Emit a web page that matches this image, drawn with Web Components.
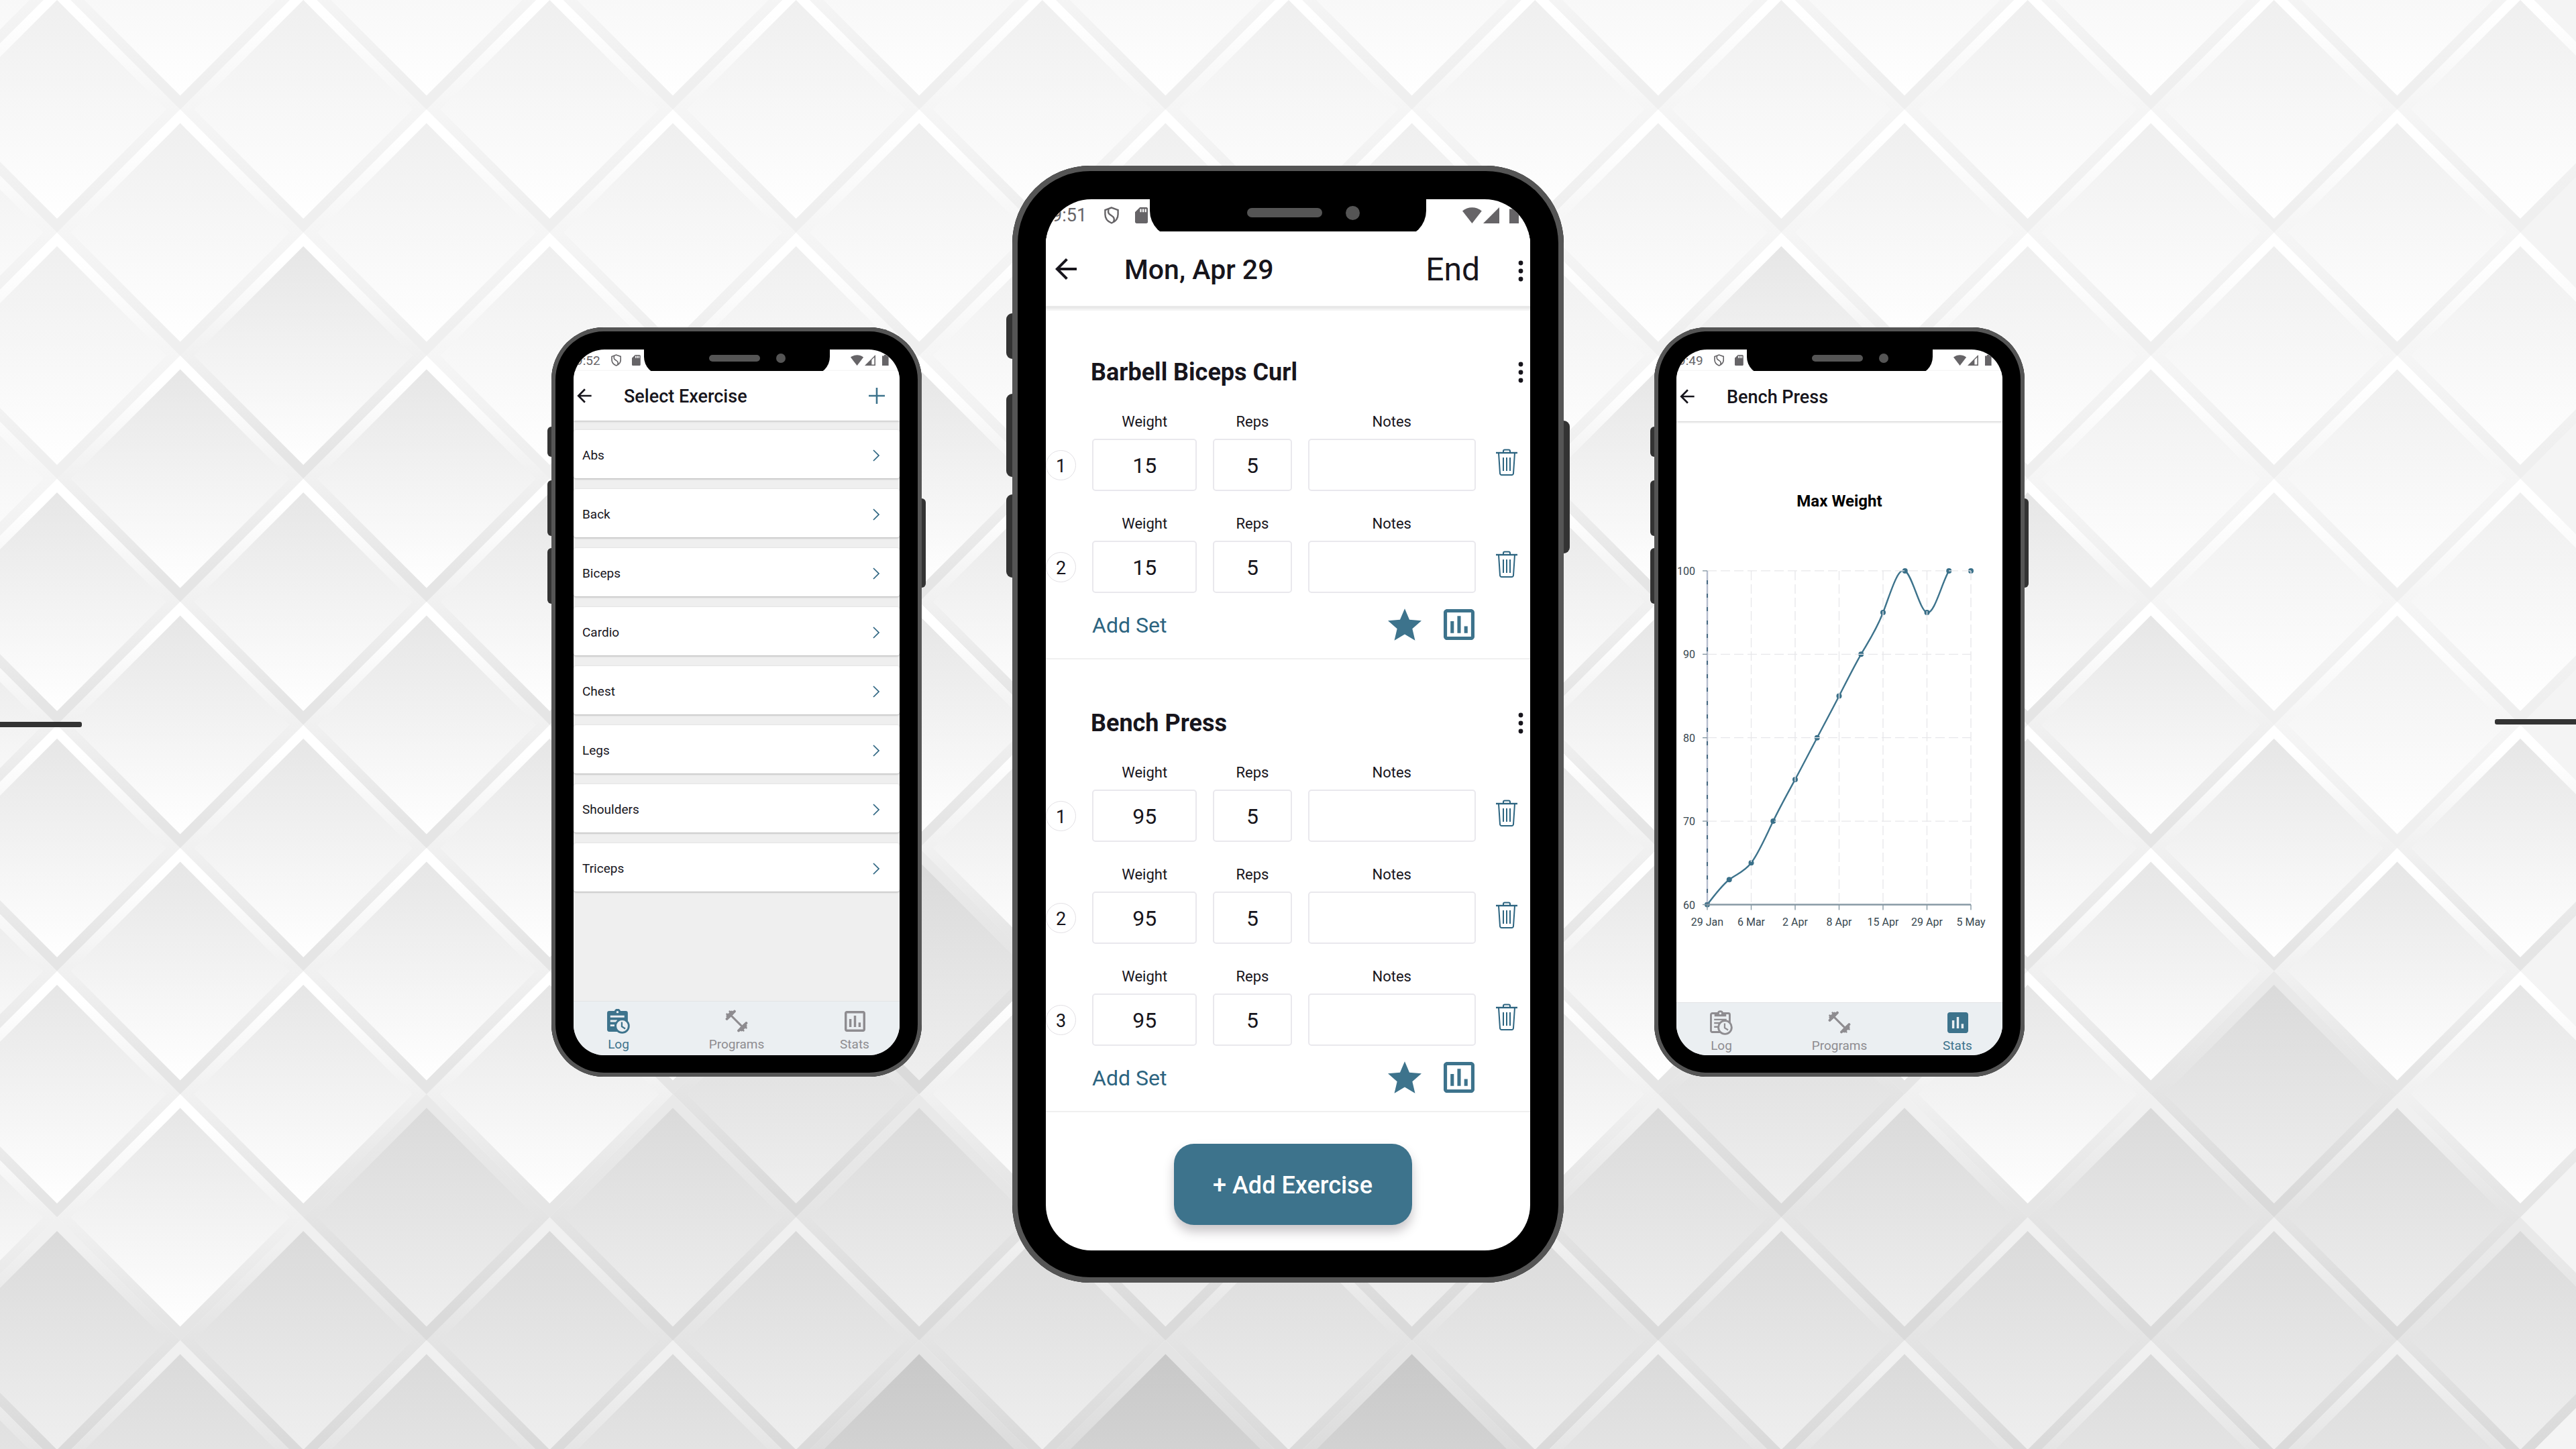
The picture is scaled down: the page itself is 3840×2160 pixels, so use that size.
<!DOCTYPE html>
<html lang="en">
<head>
<meta charset="utf-8">
<meta name="viewport" content="width=device-width, initial-scale=1">
<title>Workout tracker</title>
<style>
  html, body { margin: 0; min-height: 100%; }
  body {
    font-family: Roboto, "Liberation Sans", sans-serif;
    color: #17151c;
    background: #f4f4f4;
    overflow: hidden;
    --accent: #3d738c;
    --accent-dark: #2c6480;
  }
</style>
</head>
<body>
<app-showcase></app-showcase>

<script>
const paths = {
  back: ['0 0 24 24', '<path d="M20 11H7.83l5.59-5.59L12 4l-8 8 8 8 1.41-1.41L7.83 13H20z"/>'],
  plus: ['0 0 24 24', '<path d="M10.7 0h2.6v10.7H24v2.6H13.3V24h-2.6V13.3H0v-2.6h10.7z"/>'],
  chevron: ['0 0 10 18', '<path d="M1 1l8 8-8 8" fill="none" stroke="currentColor" stroke-width="1.7"/>'],
  kebab: ['0 0 8 32', '<circle cx="4" cy="4" r="3.4"/><circle cx="4" cy="16" r="3.4"/><circle cx="4" cy="28" r="3.4"/>'],
  shield: ['1 0 22 26', '<g fill="none" stroke="currentColor" stroke-width="2.4"><path d="M12 1.5L2.4 5v6.5c0 6 4 10.8 9.6 13 5.600-2.200 9.600-7 9.600-13V5z"/><path d="M7.500 4c-1.500 6 .5 7 4.500 9.500s5 5 3 9"/></g>'],
  sd: ['4 2 16 20', '<path d="M18 2h-8L4 8v12c0 1.100.9 2 2 2h12c1.100 0 2-.9 2-2V4c0-1.100-.9-2-2-2zm-6 6h-1.800V4H12zm3 0h-1.800V4H15zm3 0h-1.800V4H18z"/>'],
  wifi: ['0 0 24 20', '<path d="M12 20L0 4.500C7-1.300 17-1.300 24 4.500z"/>'],
  signal: ['0 0 20 20', '<path d="M0 20L20 0v20z"/>'],
  signalLow: ['0 0 20 20', '<path fill-rule="evenodd" d="M0 20L20 0v20zM13 9.500V18h5V4.500z"/>'],
  battery: ['0 0 12 20', '<path d="M3.500 0h5v2H12v18H0V2h3.500z"/>'],
  star: ['2 2 20 19', '<path d="M12 17.270L18.180 21l-1.640-7.030L22 9.240l-7.190-.61L12 2 9.190 8.630 2 9.240l5.460 4.730L5.820 21z"/>'],
  chart: ['3 3 18 18', '<path d="M9 17H7v-7h2zm4 0h-2V7h2zm4 0h-2v-4h2zm2 2H5V5h14zm0-16H5c-1.100 0-2 .9-2 2v14c0 1.100.9 2 2 2h14c1.100 0 2-.9 2-2V5c0-1.100-.9-2-2-2z"/>'],
  chartFill: ['3 3 18 18', '<path d="M19 3H5c-1.100 0-2 .9-2 2v14c0 1.100.9 2 2 2h14c1.100 0 2-.9 2-2V5c0-1.100-.9-2-2-2zM9 17H7v-7h2zm4 0h-2V7h2zm4 0h-2v-4h2z"/>'],
  trash: ['0 0 32 40', '<g fill="none" stroke="currentColor" stroke-width="2"><path d="M0 6h32" stroke-width="2.400"/><path d="M11 5.500V3.500q0-2 2-2h6q2 0 2 2v2M4 6l2 30.500q.2 2.500 2.500 2.500h15q2.300 0 2.500-2.500L28 6"/><path d="M11 13v20M16 13v20M21 13v20"/></g>'],
  log: ['0 0 33 36', '<path d="M3 3h7.500a4.700 4.700 0 0 1 9 0H27a3 3 0 0 1 3 3v24a3 3 0 0 1-3 3H3a3 3 0 0 1-3-3V6a3 3 0 0 1 3-3z"/><circle cx="15" cy="4.500" r="1.700" fill="#ebeff2"/><path d="M4.600 11h20.400M4.600 17.500h10M4.600 24h6" stroke="#ebeff2" stroke-width="2.800"/><circle cx="21.800" cy="24.800" r="9.600" fill="#ebeff2" stroke="currentColor" stroke-width="2.800"/><path d="M21.300 19v6.500l5 3.200" fill="none" stroke="currentColor" stroke-width="2.200"/>'],
  logLine: ['0 0 33 36', '<rect x="1.400" y="4.400" width="27.200" height="27.200" rx="2" fill="none" stroke="currentColor" stroke-width="2.800"/><path d="M6.500 3.500h4a4.700 4.700 0 0 1 9 0h4V9h-17z"/><circle cx="15" cy="4.500" r="1.700" fill="#ebeff2"/><path d="M6 13.500h18M6 18.500h9M6 24h6" stroke="currentColor" stroke-width="2.400"/><circle cx="21.800" cy="24.800" r="9.600" fill="#ebeff2" stroke="currentColor" stroke-width="2.800"/><path d="M21.300 19v6.500l5 3.200" fill="none" stroke="currentColor" stroke-width="2.200"/>'],
  dumbbell: ['0 0 33 33', '<g fill="none" stroke="currentColor" stroke-linecap="round"><path d="M8 8l17 17" stroke-width="3"/><path d="M3.500 9.500l6-6M23.500 29.500l6-6" stroke-width="4"/><path d="M2.500 13.500l11-11M19.500 30.500l11-11" stroke-width="3.800"/><path d="M2.500 6.500l4 4M6.500 2.500l4 4M30.500 26.500l-4-4M26.500 30.500l-4-4" stroke-width="2.600"/></g>']
};
const icon = (name) => `<svg class="i ${name}" viewBox="${paths[name][0]}" fill="currentColor" aria-hidden="true">${paths[name][1]}</svg>`;

class Base extends HTMLElement {
  constructor() { super(); this.attachShadow({ mode: 'open' }); }
  connectedCallback() {
    this.shadowRoot.innerHTML = `<style>*{box-sizing:border-box}.i{display:block;flex:none}
      button,a{font:inherit;color:inherit;background:none;border:0;padding:0;text-decoration:none;cursor:pointer}
      ${this.css()}</style>${this.html()}`;
  }
}

/* Backdrop of bevelled diamond tiles that darken towards the bottom. */
customElements.define('diamond-backdrop', class extends Base {
  css() { return `:host{position:absolute;inset:0;overflow:hidden}svg{display:block;width:100%;height:100%}`; }
  html() {
    const tones = {
      1: ['#efefef', '#ffffff', '#ffffff', '#f6f6f6', '#efefef'],
      2: ['#e6e6e6', '#ffffff', '#ffffff', '#f2f2f2', '#e5e5e5'],
      3: ['#dadada', '#efefef', '#f0f0f0', '#e5e5e5', '#dadada'],
      4: ['#c8c8c8', '#e0e0e0', '#e4e4e4', '#dcdcdc', '#c8c8c8'],
      5: ['#dadada', '#efefef', '#e9e9e9', '#e5e5e5', '#dadada']
    };
    const even = ['11111111111', '12111112111', '22222222211', '22222222222', '22232223252', '33333333335'];
    const odd = ['11111111111', '11111111111', '12222222111', '22222222221', '22225222222', '22555333333', '33334443333'];
    const p = 367.2, h = p / 2, k = 163;
    let tiles = '';
    const tile = (cx, top, t) => {
      const cy = top + h;
      tiles += `<path fill="url(#o${t})" d="M${cx} ${top}l${h} ${h}l${-h} ${h}l${-h} ${-h}z"/><path fill="url(#i${t})" d="M${cx} ${cy - k}l${k} ${k}l${-k} ${k}l${-k} ${-k}z"/>`;
    };
    even.forEach((r, j) => [...r].forEach((t, i) => tile(85 + p * i, -20.5 + 367 * j, t)));
    odd.forEach((r, j) => [...r].forEach((t, i) => tile(85 - h + p * i, 163 + 367 * (j - 1), t)));
    const defs = Object.entries(tones).map(([t, [a, b, c, m, d]]) => `
      <linearGradient id="i${t}" x2="0" y2="1"><stop stop-color="${a}"/><stop offset="1" stop-color="${b}"/></linearGradient>
      <linearGradient id="o${t}" x2="0" y2="1"><stop offset=".12" stop-color="${c}"/><stop offset=".45" stop-color="${m}"/><stop offset=".9" stop-color="${d}"/></linearGradient>`).join('');
    return `<svg viewBox="0 0 3840 2160" preserveAspectRatio="xMidYMid slice" aria-hidden="true"><defs>${defs}</defs>${tiles}
      <rect x="-6" y="1076" width="128" height="8" rx="3" fill="#333"/><rect x="3719" y="1072" width="128" height="8" rx="3" fill="#333"/></svg>`;
  }
});

/* Phone body: bezel, side keys, notch and a clipped screen for the slotted app. */
customElements.define('phone-frame', class extends Base {
  css() { return `
    :host{display:block;position:relative;flex:none;
      --w:552px;--sh:1052px;--pad:33px;--foot:32px;--rim:6px;--r:78px;--sr:46px;
      --nw:277px;--nh:38px;--nr:27px;--sw:76px;--spk:10px;--dot:14px;--spt:9px;--dgap:24px;--ninset:32px;
      --k:6px;--k1:148px;--k1h:45px;--k2:228px;--k2h:83px;--k3:329px;--k4:255px;--k4h:133px;
      --fs:19px;--st:32px;--sic:16px;--shield:18px;width:var(--w)}
    :host([size=large]){--w:822px;--sh:1567px;--pad:50px;--foot:48px;--rim:8px;--r:116px;--sr:68px;
      --nw:412px;--nh:57px;--nr:40px;--sw:112px;--spk:14px;--dot:21px;--spt:14px;--dgap:35px;--ninset:46px;
      --k:9px;--k1:220px;--k1h:68px;--k2:340px;--k2h:124px;--k3:490px;--k4:380px;--k4h:198px;
      --fs:27px;--st:48px;--sic:24px;--shield:26px}
    .body{position:relative;background:#000;border-radius:var(--r);padding:var(--pad) var(--pad) var(--foot);box-shadow:inset 0 0 0 var(--rim) #555}
    .screen{height:var(--sh);border-radius:var(--sr);overflow:hidden;background:#fff;display:flex;flex-direction:column}
    .key{position:absolute;width:calc(var(--k) * 2);background:#333;border-radius:var(--k)}
    .l{left:calc(0px - var(--k))}.r{right:calc(0px - var(--k))}
    .k1{top:var(--k1);height:var(--k1h)}.k2{top:var(--k2);height:var(--k2h)}.k3{top:var(--k3);height:var(--k2h)}.k4{top:var(--k4);height:var(--k4h)}
    .notch{position:absolute;top:calc(var(--pad) - 1px);left:50%;margin-left:calc(var(--nw) / -2);width:var(--nw);height:calc(var(--nh) + 1px);
      background:#000;border-radius:0 0 var(--nr) var(--nr);display:flex;justify-content:center;align-items:flex-start;gap:var(--dgap);padding:var(--spt) 0 0 var(--ninset)}
    .spk{width:var(--sw);height:var(--spk);border-radius:var(--spk);background:#555}
    .dot{width:var(--dot);height:var(--dot);border-radius:50%;background:#555;margin-top:calc((var(--spk) - var(--dot)) / 2)}
    .status{flex:none;height:var(--st);display:flex;align-items:center;color:#666467;font-size:var(--fs);padding-left:3px}
    .status .i{height:var(--sic);width:auto}
    .status .shield{margin-left:16px;height:var(--shield)}.status .sd{margin-left:16px}
    .status .wifi{margin-left:auto}.status .signal,.status .signalLow{margin-left:2px}.status .battery{margin:0 16px 0 10px}
    :host([size=large]) .status{padding-left:9px}
    :host([size=large]) .shield{margin-left:26px}:host([size=large]) .sd{margin-left:24px}
    :host([size=large]) .battery{margin:0 17px 0 15px}
    slot{display:flex;flex-direction:column;flex:1;min-height:0}`; }
  html() {
    const large = this.getAttribute('size') === 'large';
    return `<i class="key l k1"></i><i class="key l k2"></i><i class="key l k3"></i><i class="key r k4"></i>
      <div class="body"><div class="screen">
        <div class="status"><span>${this.getAttribute('time')}</span>${icon('shield')}${icon('sd')}${icon('wifi')}${icon(large ? 'signal' : 'signalLow')}${icon('battery')}</div>
        <slot></slot></div>
        <div class="notch"><span class="spk"></span><span class="dot"></span></div></div>`;
  }
});

customElements.define('app-bar', class extends Base {
  css() { return `
    :host{display:flex;flex:none;align-items:center;height:var(--bar-h,74px);background:#fff;position:relative;z-index:1;
      box-shadow:0 1px 3px rgba(0,0,0,.22)}
    .back{width:32px;height:32px}
    h1{margin:0 auto 0 43px;padding-top:2px;font-weight:500;font-size:27px;line-height:32px}
    :host([size=large]){padding-left:6px;height:111px;box-shadow:0 4px 0 #e9e9e9,0 7px 0 #f3f3f3}
    :host([size=large]) .back{width:48px;height:48px}
    :host([size=large]) h1{margin-left:63px;font-size:41px;line-height:48px}`; }
  html() { return `<button type="button" aria-label="Back">${icon('back')}</button><h1>${this.getAttribute('heading')}</h1><slot></slot>`; }
});

customElements.define('icon-button', class extends Base {
  css() { return `:host{display:block;flex:none}button{display:block;width:var(--iw);height:var(--ih)}.i{width:100%;height:100%}`; }
  html() { return `<button type="button" aria-label="${this.getAttribute('label')}">${icon(this.getAttribute('name'))}</button>`; }
});

customElements.define('tab-bar', class extends Base {
  css() { return `
    :host{display:block;flex:none;height:var(--nav-h,81px);background:#ebeff2;border-top:1px solid #e2e4e6;overflow:hidden}
    nav{display:grid;grid-template-columns:repeat(3,1fr);margin:0 -21px;padding-top:10px;color:#8e8c90;font-size:19px;line-height:24px}
    a{display:flex;flex-direction:column;align-items:center;gap:4px}
    a.on{color:var(--accent)}
    span{display:flex;height:38px;align-items:center}
    .log,.logLine{width:34px;height:37px}.dumbbell{width:34px;height:34px}.chart,.chartFill{width:31px;height:31px}`; }
  html() {
    const on = this.getAttribute('active');
    const tab = (t, ic, act) => `<a href="#${t}" class="${on === t ? 'on' : ''}"><span>${icon(on === t ? act : ic)}</span>${t}</a>`;
    return `<nav>${tab('Log', 'logLine', 'log')}${tab('Programs', 'dumbbell', 'dumbbell')}${tab('Stats', 'chart', 'chartFill')}</nav>`;
  }
});

customElements.define('category-list', class extends Base {
  css() { return `
    :host{display:block;flex:1;background:#efefef}
    ul{list-style:none;margin:0;padding:14px 0 0;display:flex;flex-direction:column;gap:16px}
    a{display:flex;align-items:center;justify-content:space-between;height:72px;padding:3px 30px 0 13px;background:#fff;border-radius:4px;
      box-shadow:0 1px 3px rgba(0,0,0,.28);font-size:19px;line-height:24px}
    .i{width:10px;height:18px;color:var(--accent-dark)}`; }
  html() { return `<ul>${this.getAttribute('items').split(',').map(t => `<li><a href="#${t}">${t}${icon('chevron')}</a></li>`).join('')}</ul>`; }
});

customElements.define('set-row', class extends Base {
  css() { return `
    :host{display:grid;grid-template-columns:45px 156fr 117fr 250fr 44px;column-gap:24px;padding:36px 13px 0 0;align-items:end}
    .no{width:45px;height:45px;border:1px solid #e2e0e4;border-radius:50%;display:grid;place-items:center;font-size:27px;padding-top:2px;margin-bottom:16px}
    .f{display:flex;flex-direction:column;gap:12px;text-align:center;min-width:0}
    label{font-size:22px;line-height:26px}
    input{width:100%;height:78px;border:2px solid #e9e8ed;border-radius:5px;background:#fff;text-align:center;font:inherit;font-size:32px;color:inherit;padding:2px 0 0}
    .del{display:grid;place-items:center;margin-bottom:23px;color:var(--accent-dark)}
    .trash{width:32px;height:40px}`; }
  html() {
    const f = (id, l, v) => `<div class="f"><label for="${id}">${l}</label><input id="${id}" value="${v}"></div>`;
    return `<span class="no">${this.getAttribute('no')}</span>${f('w', 'Weight', this.getAttribute('weight'))}${f('r', 'Reps', this.getAttribute('reps'))}${f('n', 'Notes', '')}
      <button class="del" type="button" aria-label="Delete set">${icon('trash')}</button>`;
  }
});

customElements.define('exercise-card', class extends Base {
  css() { return `
    :host{display:block;padding:74px 0 25px;border-bottom:2px solid #f0f0f0}
    header{display:flex;justify-content:space-between;align-items:center;height:42px;margin-bottom:4px;padding:0 10px 0 67px}
    h2{margin:0;font-size:36px;line-height:42px;font-weight:700}
    footer{display:flex;align-items:center;height:50px;margin-top:22px;padding:0 83px 0 69px;color:var(--accent)}
    .add{margin-right:auto;padding-top:2px;font-size:32px;line-height:40px;color:var(--accent-dark)}
    .kebab{width:8px;height:32px}.star{width:50px;height:48px}.chart{width:46px;height:46px;margin-left:33px}`; }
  html() { return `<header><h2>${this.getAttribute('name')}</h2><button type="button" aria-label="Exercise menu">${icon('kebab')}</button></header>
    <slot></slot>
    <footer><button class="add" type="button">Add Set</button><button type="button" aria-label="Favourite">${icon('star')}</button><button type="button" aria-label="Statistics">${icon('chart')}</button></footer>`; }
});

customElements.define('weight-chart', class extends Base {
  css() { return `
    :host{display:block;flex:1;padding-top:105px}
    h2{margin:0 0 69px;text-align:center;font-size:24px;line-height:28px;font-weight:700;color:#000}
    svg{display:block;width:100%;overflow:visible}
    text{font-size:16px;fill:#37474f}`; }
  html() {
    const v = [60, 63, 65, 70, 75, 80, 85, 90, 95, 100, 95, 100, 100];
    const x0 = 46, dx = 65.5, Y = n => 518.5 - (n - 60) * 12.44, X = i => x0 + i * dx / 2;
    /* natural cubic spline through equally spaced samples */
    const n = v.length, y = v.map(Y), m = Array(n).fill(0), c = [0], d = [0];
    for (let i = 1; i < n - 1; i++) {
      const q = 4 - c[i - 1];
      c[i] = 1 / q; d[i] = (6 * (y[i + 1] - 2 * y[i] + y[i - 1]) - d[i - 1]) / q;
    }
    for (let i = n - 2; i > 0; i--) m[i] = d[i] - c[i] * m[i + 1];
    let path = `M${X(0)} ${y[0]}`;
    for (let i = 0; i < n - 1; i++) {
      const s0 = y[i + 1] - y[i] - (2 * m[i] + m[i + 1]) / 6, s1 = y[i + 1] - y[i] + (m[i] + 2 * m[i + 1]) / 6;
      path += `C${X(i) + dx / 6} ${y[i] + s0 / 3} ${X(i + 1) - dx / 6} ${y[i + 1] - s1 / 3} ${X(i + 1)} ${y[i + 1]}`;
    }
    const right = x0 + 6 * dx, top = Y(100), bot = Y(60);
    const days = ['29 Jan', '6 Mar', '2 Apr', '8 Apr', '15 Apr', '29 Apr', '5 May'];
    const ticks = [100, 90, 80, 70, 60];
    return `<h2>Max Weight</h2><svg viewBox="0 0 486 570" role="img" aria-label="Max weight by date">
      <clipPath id="c"><rect x="0" y="${top - .5}" width="486" height="${bot - top + 2}"/></clipPath>
      <path d="${path}" fill="none" stroke="#3d738c" stroke-width="2.400" clip-path="url(#c)"/>
      ${v.map((t, i) => `<circle cx="${X(i)}" cy="${Y(t)}" r="4" fill="#3a7089"/>`).join('')}
      <g stroke="#e7e7ea" stroke-width="1.300" stroke-dasharray="14 6">${ticks.slice(0, 4).map(t => `<path d="M${x0} ${Y(t)}H${right}"/>`).join('')}
      ${days.slice(1).map((t, i) => `<path d="M${x0 + dx * (i + 1)} ${top}V${bot}"/>`).join('')}</g>
      <path d="M${x0} ${top}V${bot}" stroke="#b4bccd" stroke-width="2.400"/><path d="M${x0} ${top + 14}V${bot}" stroke="#2c5570" stroke-width="1.600" stroke-dasharray="6 14"/>
      <g stroke="#8799a4"><path d="M${x0} ${bot}H${right}" stroke-width="2.600"/>
      ${ticks.map(t => `<path d="M${x0 - 7} ${Y(t)}H${x0}" stroke-width="1.400"/>`).join('')}
      ${days.map((t, i) => `<path d="M${x0 + dx * i} ${bot}v8" stroke-width="1.400"/>`).join('')}</g>
      ${ticks.map(t => `<text x="28" y="${Y(t) + 6}" text-anchor="end">${t}</text>`).join('')}
      ${days.map((t, i) => `<text x="${x0 + dx * i}" y="550" text-anchor="middle">${t}</text>`).join('')}</svg>`;
  }
});

customElements.define('app-showcase', class extends Base {
  css() { return `
    :host{display:block;position:relative;min-height:100vh;overflow:hidden}
    main{position:relative;display:flex;justify-content:center;align-items:flex-start;gap:135px;padding-top:247px}
    .side{margin-top:241px}
    .stats{--bar-h:75px;--nav-h:79px}
    .plus{--iw:24px;--ih:24px;color:var(--accent);margin-right:22px}
    .end{font-size:48px;line-height:56px;padding-top:2px}
    .more{--iw:8px;--ih:32px;margin:6px 10px 0 57px}
    .log{display:flex;flex-direction:column;flex:1;padding-top:4px}
    .cta{display:flex;justify-content:center;padding:47px 0 0 14px}
    .cta button{width:355px;height:121px;border-radius:30px;background:var(--accent);color:#fff;font-size:36px;font-weight:500;padding-top:2px;
      box-shadow:0 10px 16px rgba(60,50,60,.28)}`; }
  html() { return `<diamond-backdrop></diamond-backdrop>
    <main>
      <phone-frame class="side" time="9:52">
        <app-bar heading="Select Exercise"><icon-button class="plus" name="plus" label="New exercise"></icon-button></app-bar>
        <category-list items="Abs,Back,Biceps,Cardio,Chest,Legs,Shoulders,Triceps"></category-list>
        <tab-bar active="Log"></tab-bar>
      </phone-frame>
      <phone-frame size="large" time="9:51">
        <app-bar size="large" heading="Mon, Apr 29"><button class="end" type="button">End</button><icon-button class="more" name="kebab" label="Menu"></icon-button></app-bar>
        <div class="log">
          <exercise-card name="Barbell Biceps Curl">
            <set-row no="1" weight="15" reps="5"></set-row><set-row no="2" weight="15" reps="5"></set-row>
          </exercise-card>
          <exercise-card name="Bench Press">
            <set-row no="1" weight="95" reps="5"></set-row><set-row no="2" weight="95" reps="5"></set-row><set-row no="3" weight="95" reps="5"></set-row>
          </exercise-card>
          <div class="cta"><button type="button">+ Add Exercise</button></div>
        </div>
      </phone-frame>
      <phone-frame class="side stats" time="9:49">
        <app-bar heading="Bench Press"></app-bar>
        <weight-chart></weight-chart>
        <tab-bar active="Stats"></tab-bar>
      </phone-frame>
    </main>`; }
});
</script>
</body>
</html>
